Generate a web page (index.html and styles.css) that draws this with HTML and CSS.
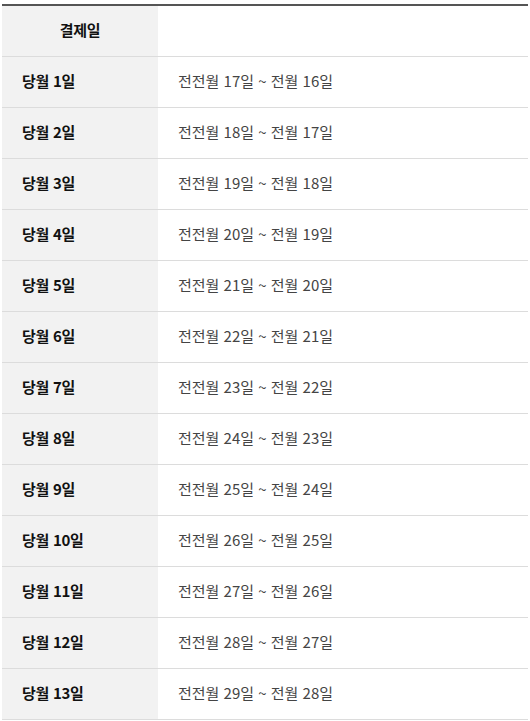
FILE: index.html
```html
<!DOCTYPE html>
<html lang="ko">
<head>
<meta charset="utf-8">
<link rel="stylesheet" href="styles.css">
</head>
<body>
<table class="pay-table">
  <thead>
    <tr><th class="col-key">결제일</th><th class="col-val"></th></tr>
  </thead>
  <tbody>
    <tr><th class="col-key">당월 1일</th><td class="col-val">전전월 17일 ~ 전월 16일</td></tr>
    <tr><th class="col-key">당월 2일</th><td class="col-val">전전월 18일 ~ 전월 17일</td></tr>
    <tr><th class="col-key">당월 3일</th><td class="col-val">전전월 19일 ~ 전월 18일</td></tr>
    <tr><th class="col-key">당월 4일</th><td class="col-val">전전월 20일 ~ 전월 19일</td></tr>
    <tr><th class="col-key">당월 5일</th><td class="col-val">전전월 21일 ~ 전월 20일</td></tr>
    <tr><th class="col-key">당월 6일</th><td class="col-val">전전월 22일 ~ 전월 21일</td></tr>
    <tr><th class="col-key">당월 7일</th><td class="col-val">전전월 23일 ~ 전월 22일</td></tr>
    <tr><th class="col-key">당월 8일</th><td class="col-val">전전월 24일 ~ 전월 23일</td></tr>
    <tr><th class="col-key">당월 9일</th><td class="col-val">전전월 25일 ~ 전월 24일</td></tr>
    <tr><th class="col-key">당월 10일</th><td class="col-val">전전월 26일 ~ 전월 25일</td></tr>
    <tr><th class="col-key">당월 11일</th><td class="col-val">전전월 27일 ~ 전월 26일</td></tr>
    <tr><th class="col-key">당월 12일</th><td class="col-val">전전월 28일 ~ 전월 27일</td></tr>
    <tr><th class="col-key">당월 13일</th><td class="col-val">전전월 29일 ~ 전월 28일</td></tr>
  </tbody>
</table>
</body>
</html>
```

FILE: styles.css
```css
html, body {
  margin: 0;
  padding: 0;
  background: #fff;
}
body {
  padding: 4px 2px 0 2px;
  font-family: "Noto Sans CJK KR", "Noto Sans", sans-serif;
}
.pay-table {
  width: 526px;
  border-collapse: collapse;
  border-top: 2px solid #555;
  table-layout: fixed;
}
.pay-table th,
.pay-table td {
  height: 51px;
  padding: 0 0 2px 20px;
  border-bottom: 1px solid #dcdcdc;
  font-size: 15px;
  text-align: left;
  vertical-align: middle;
  box-sizing: border-box;
}
.pay-table th.col-key {
  width: 156px;
  background: #f2f2f2;
  color: #111;
  font-weight: 700;
  letter-spacing: -0.3px;
}
.pay-table thead th.col-key {
  text-align: center;
  padding: 0 0 2px 0;
}
.pay-table .col-val {
  color: #444;
  font-weight: 400;
  background: #fff;
}
```
